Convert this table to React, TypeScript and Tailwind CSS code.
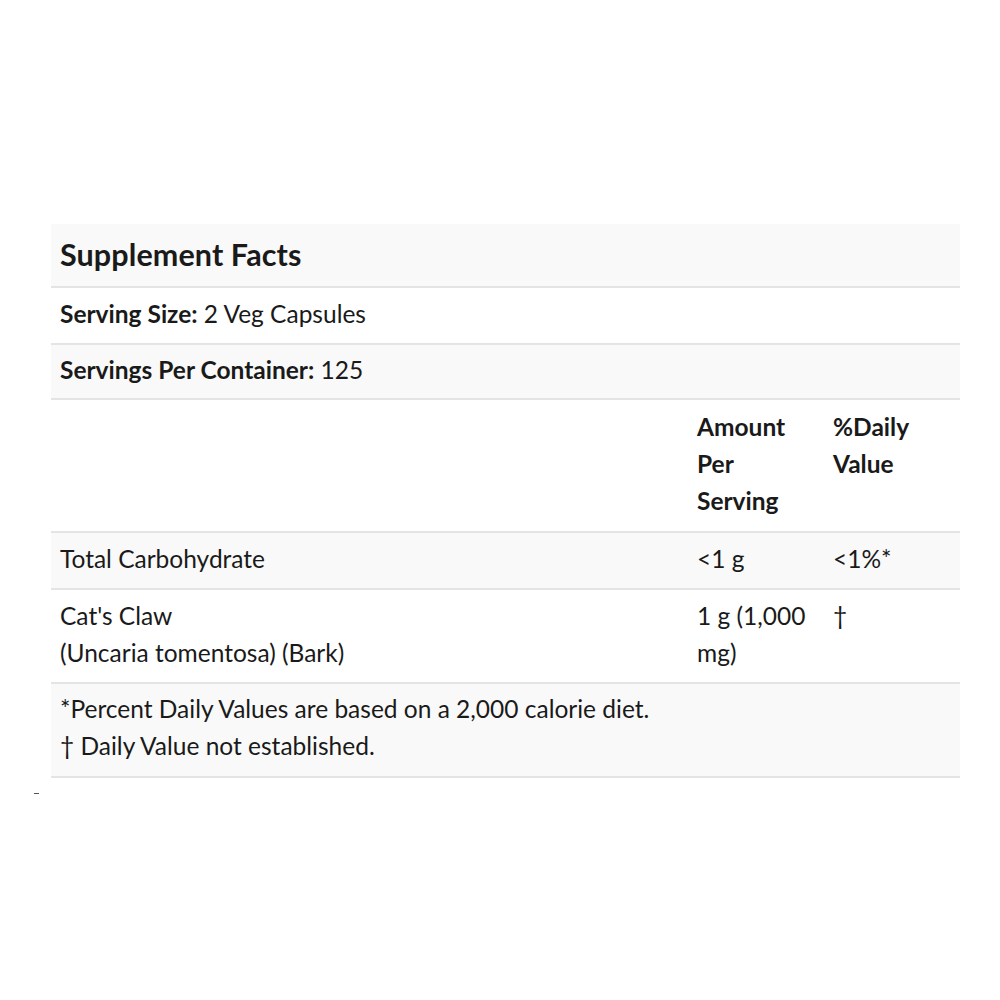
import React from 'react';

const font = { fontFamily: 'Lato, "Open Sans", sans-serif' };

function Row({ shaded, children, className = '' }: { shaded?: boolean; children: React.ReactNode; className?: string }) {
  return (
    <div className={`flex border-b-2 border-[#e4e4e4] ${shaded ? 'bg-[#f9f9f9]' : 'bg-white'} ${className}`}>
      {children}
    </div>
  );
}

export default function App() {
  return (
    <div className="w-[1000px] h-[1000px] bg-white relative text-[#1a1a1a]" style={font}>
      <div className="pt-[224px] pl-[51px] w-[960px]">
        <div className="w-[909px] text-[24.5px] leading-[37px] tracking-[0px]">
          <Row shaded>
            <div className="px-[9px] pt-[8px] pb-[10px] text-[30.5px] leading-[44px] font-bold tracking-[0.1px]">Supplement Facts</div>
          </Row>
          <Row>
            <div className="px-[9px] pt-[7px] pb-[11px]"><span className="font-bold">Serving Size:</span> 2 Veg Capsules</div>
          </Row>
          <Row shaded>
            <div className="px-[9px] pt-[6px] pb-[10px]"><span className="font-bold">Servings Per Container:</span> 125</div>
          </Row>
          <Row className="font-bold">
            <div className="w-[637px] px-[9px] pt-[8px] pb-[12px]"></div>
            <div className="w-[136px] px-[9px] pt-[8px] pb-[12px]">Amount<br />Per<br />Serving</div>
            <div className="w-[136px] px-[9px] pt-[8px] pb-[12px]">%Daily<br />Value</div>
          </Row>
          <Row shaded>
            <div className="w-[637px] px-[9px] pt-[7px] pb-[11px]">Total Carbohydrate</div>
            <div className="w-[136px] px-[9px] pt-[7px] pb-[11px]">&lt;1 g</div>
            <div className="w-[136px] px-[9px] pt-[7px] pb-[11px]">&lt;1%*</div>
          </Row>
          <Row>
            <div className="w-[637px] px-[9px] pt-[7px] pb-[11px]">Cat's Claw<br />(Uncaria tomentosa) (Bark)</div>
            <div className="w-[136px] px-[9px] pt-[7px] pb-[11px]">1 g (1,000 mg)</div>
            <div className="w-[136px] px-[9px] pt-[7px] pb-[11px]">†</div>
          </Row>
          <Row shaded>
            <div className="px-[9px] pt-[6px] pb-[12px]">*Percent Daily Values are based on a 2,000 calorie diet.<br />† Daily Value not established.</div>
          </Row>
        </div>
      </div>
      <div className="absolute left-[34px] top-[793px] w-[5px] h-[1px] bg-[#555]"></div>
    </div>
  );
}
